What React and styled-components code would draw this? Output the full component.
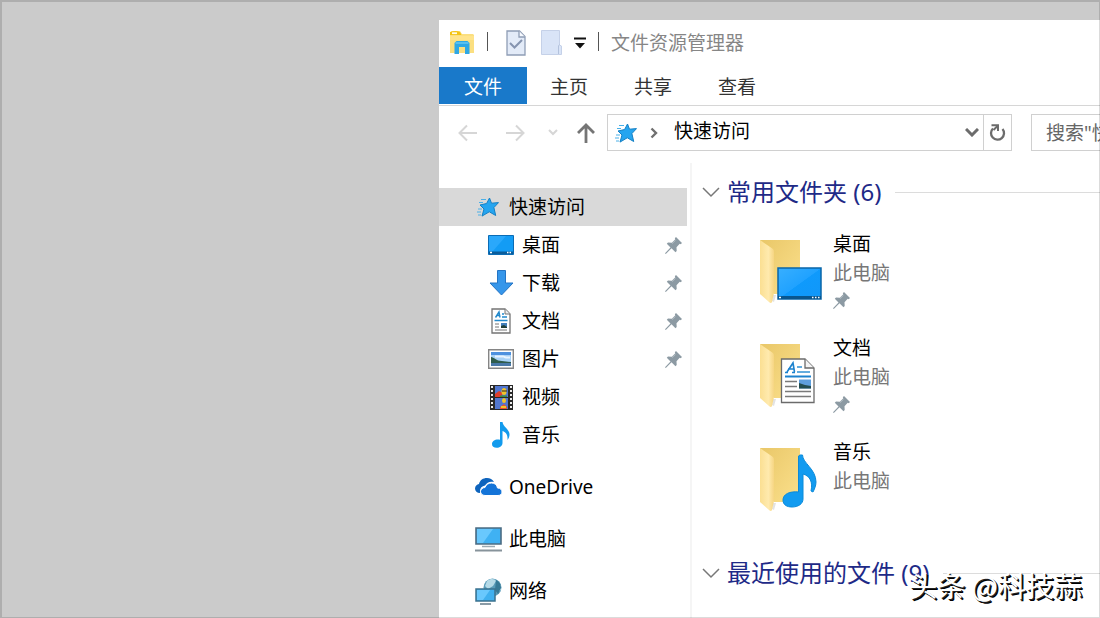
import React, { useState } from "react";
import styled, { createGlobalStyle } from "styled-components";

const GlobalStyle = createGlobalStyle`
  * {
    box-sizing: border-box;
  }
  body {
    margin: 0;
    font-family: "Noto Sans", "Noto Sans CJK SC", sans-serif;
    font-size: 19px;
    color: #000;
  }
  button, input {
    font: inherit;
    color: inherit;
  }
  button {
    padding: 0;
    border: 0;
    background: none;
    cursor: pointer;
  }
  svg {
    display: block;
    flex: none;
  }
`;

const Desktop = styled.div`
  position: relative;
  min-height: 100vh;
  display: flex;
  padding: 20px 0 0 439px;
  overflow: hidden;
  background-color: #cbcbcb;

  &::after {
    content: "";
    position: absolute;
    inset: 0;
    border: 1px solid rgba(0, 0, 0, 0.14);
    border-width: 2px 1px 1px 2px;
    pointer-events: none;
  }
`;

const Explorer = styled.div`
  flex: 1;
  min-width: 0;
  display: flex;
  flex-direction: column;
  background-color: #fff;
`;

const TitleBar = styled.header`
  height: 47px;
  display: flex;
  align-items: center;
  padding: 0 0 2px 10px;
`;

const Divider = styled.span`
  width: 1px;
  height: 19px;
  margin: 0 ${(p) => p.$after}px 2px 12px;
  background-color: #555;
`;

const QuickButton = styled.button`
  margin-right: ${(p) => p.$gap || 0}px;
`;

const Title = styled.h1`
  margin: 0;
  font-size: 19px;
  font-weight: 400;
  line-height: 28px;
  color: #868686;
`;

const Tabs = styled.div`
  display: flex;
  height: 39px;
  padding-bottom: 1px;
  border-bottom: 1px solid #d6d6d6;
`;

const Tab = styled.button`
  min-width: ${(p) => (p.$file ? 88 : 84)}px;
  height: 37px;
  background-color: ${(p) => (p.$file ? "#1979ca" : "transparent")};
  color: ${(p) => (p.$file ? "#fff" : "#333")};
`;

const NavBar = styled.div`
  display: flex;
  align-items: center;
  padding: 8px 0 0 19px;
`;

const NavButton = styled.button`
  margin-right: ${(p) => p.$gap}px;
`;

const Address = styled.div`
  flex: 1;
  min-width: 0;
  height: 37px;
  display: flex;
  align-items: center;
  padding-left: 7px;
  border: 1px solid #d0d0d0;
`;

const Crumb = styled.button`
  margin-left: 16px;
  margin-right: auto;
  padding-bottom: 2px;
  line-height: 33px;
`;

const Refresh = styled.button`
  width: 28px;
  height: 35px;
  display: flex;
  align-items: center;
  justify-content: center;
  margin-left: 4px;
  border-left: 1px solid #d0d0d0;
`;

const Search = styled.input`
  width: 69px;
  height: 37px;
  margin-left: 19px;
  padding: 0 0 0 14px;
  border: 1px solid #d0d0d0;
  border-right: 0;
  border-radius: 0;
  outline: 0;
  background-color: #fff;

  &::placeholder {
    color: #666;
    opacity: 1;
  }
`;

const Body = styled.div`
  flex: 1;
  display: flex;
  padding-top: 12px;
`;

const Sidebar = styled.nav`
  width: 253px;
  flex: none;
  padding: 25px 3px 0 0;
  border-right: 2px solid #f5f5f5;
`;

const SideItem = styled.a`
  height: 38px;
  display: flex;
  align-items: center;
  margin-top: ${(p) => (p.$root ? 14 : 0)}px;
  padding: 0 5px 0 ${(p) => (p.$child ? 48 : 35)}px;
  background-color: ${(p) => (p.$active ? "#d9d9d9" : "transparent")};
  color: #000;
  text-decoration: none;
`;

const SideIcon = styled.span`
  width: 28px;
  display: flex;
  justify-content: center;
  margin-right: 7px;
`;

const SideLabel = styled.span`
  flex: 1;
  line-height: 28px;
`;

const Content = styled.main`
  flex: 1;
  min-width: 0;
  padding-top: 11px;
`;

const GroupTitle = styled.h2`
  display: flex;
  align-items: center;
  margin: 0;
  padding-left: 10px;
  font-size: 24px;
  font-weight: 400;
  line-height: 36px;
  color: #1e2a87;

  &::after {
    content: "";
    flex: 1;
    height: 1px;
    margin-left: 14px;
    background-color: #dcdcdc;
  }
`;

const GroupToggle = styled.button`
  display: flex;
  align-items: center;
  gap: 7px;
`;

const FolderList = styled.ul`
  margin: 0;
  padding: 20px 0 13px 67px;
  list-style: none;
`;

const FolderItem = styled.li`
  height: 104px;
  display: flex;
  gap: 8px;
`;

const FolderIcon = styled.div`
  padding-top: 8px;
`;

const FolderText = styled.div`
  display: flex;
  flex-direction: column;
  line-height: 29px;
`;

const FolderPlace = styled.span`
  margin-bottom: 4px;
  color: #777;
`;

const Watermark = styled.div`
  position: absolute;
  right: 18px;
  bottom: 12px;
  font-family: "Noto Sans CJK SC", sans-serif;
  font-size: 28px;
  line-height: 42px;
  color: #fff;
  text-shadow: 1px 1px 0 #222, 2px 2px 0 #000;
`;

const StarIcon = () => (
  <svg width="22" height="20" viewBox="0 0 22 20">
    <path
      d="M12.500 1l2 5.200 7-.6-4.600 5 1.800 7.900-6.400-3.700-7.300 4.300 2-7.100-4-4L9.600 6.500z"
      fill="#25a5f0"
      stroke="#1580c4"
      strokeLinejoin="round"
    />
    <path d="M4 2.500h5M2 5.500h4M1 12h4M0 15h4M1 18h3" stroke="#4ab0e8" strokeWidth="1" />
  </svg>
);

const PinIcon = () => (
  <svg width="17" height="17" viewBox="0 0 17 17">
    <path d="M11 0l6 6-1.300 1.200-1-.4-3.200 3.500.2 3.700-1.200 1.200-4-4L.8 17 0 16.200l5.500-5.700-3.700-3.800L3 5.500l3.800.2L10.300 2.300 9.800 1.200z" fill="#8c9aa3" />
    <path d="M7 6.600l3.500-3.300" stroke="#b5c0c6" />
  </svg>
);

const ExplorerIcon = () => (
  <svg width="26" height="24" viewBox="0 0 26 24">
    <path d="M1 2.500L2.500 0H11l2 3h11l1 1v18H1z" fill="#fbdf80" />
    <path d="M1 1q6-2 10 0l1.500 3H1z" fill="#f4c415" />
    <path d="M3 2.200h5" stroke="#fffbe8" strokeWidth="1.800" />
    <path d="M1 5h24v4H1z" fill="#ffe48c" />
    <path d="M5.500 23V12l2-2h11l2 2v11H16v-7h-6v7z" fill="#2ea8e5" />
    <path d="M6.500 12h13" stroke="#67c7f2" strokeWidth="1.500" />
  </svg>
);

const PropertiesIcon = () => (
  <svg width="20" height="26" viewBox="0 0 20 26">
    <path d="M1 1h12.500L19 6.500V25H1z" fill="#e3ebf8" stroke="#8f9db5" strokeWidth="1.300" />
    <path d="M13 1v6h6" fill="#f7faff" stroke="#8f9db5" strokeWidth="1.300" />
    <path d="M4 13l4.500 4.500L16 10" fill="none" stroke="#8594b0" strokeWidth="2" />
  </svg>
);

const NewFolderIcon = () => (
  <svg width="21" height="25" viewBox="0 0 21 25">
    <path d="M.5.500h18V15l2 1v8.500H.5z" fill="#d9e4f7" stroke="#c5d1e8" />
    <path d="M17.500 24v-8l1-1.500" fill="none" stroke="#b3c2dd" />
  </svg>
);

const MenuArrowIcon = () => (
  <svg width="12" height="12" viewBox="0 0 12 12">
    <path d="M0 1.500h12" stroke="#111" strokeWidth="2" />
    <path d="M1 6h10l-5 5.500z" fill="#111" />
  </svg>
);

const ArrowIcon = ({ back }) => (
  <svg width="20" height="18" viewBox="0 0 20 18">
    <path
      d={back ? "M19 9H1.500M9 1.500L1.500 9 9 16.500" : "M1 9h17.500M11 1.500L18.500 9 11 16.500"}
      fill="none"
      stroke="#d6d6d6"
      strokeWidth="2"
    />
  </svg>
);

const UpIcon = () => (
  <svg width="18" height="20" viewBox="0 0 18 20">
    <path d="M9 20V2M1 10l8-8 8 8" fill="none" stroke="#757575" strokeWidth="2.800" />
  </svg>
);

const ChevronIcon = ({ width = 14, color = "#6c6c6c", stroke = 3 }) => (
  <svg width={width} height={width / 2 + 2} viewBox={`0 0 ${width} ${width / 2 + 2}`}>
    <path d={`M1 1l${width / 2 - 1} ${width / 2 - 1} ${width / 2 - 1}-${width / 2 - 1}`} fill="none" stroke={color} strokeWidth={stroke} />
  </svg>
);

const CrumbArrowIcon = () => (
  <svg width="8" height="12" viewBox="0 0 8 12">
    <path d="M1.500 1.500L6 6l-4.500 4.500" fill="none" stroke="#707070" strokeWidth="2.400" />
  </svg>
);

const RefreshIcon = () => (
  <svg width="17" height="18" viewBox="0 0 17 18">
    <path d="M4 4.500a6.500 6.500 0 1 0 9.500.5" fill="none" stroke="#6c6c6c" strokeWidth="2.300" />
    <path d="M2.500 1.200H9V7" fill="none" stroke="#6c6c6c" strokeWidth="2" />
    <path d="M9 1.500L4.500 6" stroke="#6c6c6c" strokeWidth="2" />
  </svg>
);

const DesktopIcon = () => (
  <svg width="26" height="20" viewBox="0 0 26 20">
    <path d="M.5.500h25v19H.5z" fill="#139cf5" stroke="#0b6cb5" />
    <path d="M1 1h17L5 16H1z" fill="#2aa8fb" />
    <path d="M1 16.500h24V19H1z" fill="#0b5d9b" />
    <path d="M2 17.500h2M19 17.500h1.500M21.500 17.500H23" stroke="#fff" strokeWidth="1.500" />
  </svg>
);

const DownloadIcon = () => (
  <svg width="25" height="26" viewBox="0 0 25 26">
    <path d="M8.500.5h8V13h7.500L12.500 25 1 13h7.500z" fill="#3596ea" stroke="#2474c4" />
  </svg>
);

const DocumentIcon = () => (
  <svg width="20" height="26" viewBox="0 0 20 26">
    <path d="M1 1h13l5 5v19H1z" fill="#fff" stroke="#747474" strokeWidth="1.300" />
    <path d="M14 1v5h5" fill="#eee" stroke="#747474" />
    <path d="M4.500 9.500L8 4l1 5.500M5.500 7.500H9" fill="none" stroke="#2289cc" strokeWidth="1.400" />
    <path d="M11 6h2M11 9h5M3.500 12.500h13" stroke="#2289cc" strokeWidth="1.500" />
    <path d="M4 16h4M4 19h4M4 22h12" stroke="#777" strokeWidth="1.200" />
    <path d="M10 15h6v5h-6z" fill="#427fbb" />
    <path d="M10 18l3-1 3 2v1h-6z" fill="#213e36" />
  </svg>
);

const PictureIcon = () => (
  <svg width="26" height="20" viewBox="0 0 26 20">
    <path d="M.7.7h24.600v18.600H.7z" fill="#fff" stroke="#858585" strokeWidth="1.400" />
    <path d="M3 3h20v14H3z" fill="#a9d2f6" />
    <path d="M3 3h20v3H3z" fill="#4e91df" />
    <path d="M7 7.500h8l3 1h4" stroke="#e8f4ff" strokeWidth="2" />
    <path d="M3 8c3 0 5 4 11 4l9 1v2H3z" fill="#2f5c4c" />
    <path d="M3 14h20v3H3z" fill="#4a79a8" />
  </svg>
);

const VideoIcon = () => (
  <svg width="23" height="25" viewBox="0 0 23 25">
    <path d="M0 0h23v25H0z" fill="#292929" />
    <path d="M2 1v24M21 1v24" stroke="#eee" strokeWidth="2" strokeDasharray="2 2" />
    <path d="M5 1h13v11H5zM5 13h13v11H5z" fill="#5277cf" />
    <path d="M5 9l4-3 4 2-2 4H5z" fill="#df3e2b" />
    <ellipse cx="14" cy="6.500" rx="2.500" ry="3.500" fill="#f1c329" />
    <path d="M12 6h5" stroke="#292929" />
    <path d="M10 10.500h7V12h-7z" fill="#3b8b40" />
    <ellipse cx="14" cy="15.500" rx="2" ry="2.500" fill="#f1c329" />
    <path d="M10 22l4-3 3 3v2h-7z" fill="#e65234" />
    <path d="M11 22h5" stroke="#f1c329" strokeWidth="2" />
  </svg>
);

const MusicIcon = () => (
  <svg width="20" height="26" viewBox="0 0 20 26">
    <path d="M9 0h2.500c.5 5 7 7 7 12.500 0 2-.7 4-2 5.500.5-5-1.500-8-5-9v12c0 3-2.800 4.800-5.800 4.800S1 24.500 1 22c0-3.200 3.800-5.200 8-4.200z" fill="#139bed" />
  </svg>
);

const CloudIcon = () => (
  <svg width="27" height="18" viewBox="0 0 27 18">
    <path d="M5 15C2 15 0 13 0 10.500S2 6.500 4 6C5 2 8 0 12 0c3 0 5.500 1.500 7 4-4-1-7 0-9 3.500C7 8 5 10 5 13z" fill="#0e64bd" />
    <path
      d="M10 17.500c-3 0-4.500-2-4.500-4s2-4 4.500-4c1-3 3.500-4.500 6.500-4.500 3.500 0 5.500 2 6 5 3 0 4.500 2 4.500 4s-1.500 3.500-4 3.500z"
      fill="#1474d8"
      stroke="#fff"
      strokeWidth="1"
    />
  </svg>
);

const ComputerIcon = () => (
  <svg width="27" height="25" viewBox="0 0 27 25">
    <path d="M1 1h25v16H1z" fill="#3fb1f3" stroke="#4c6c82" strokeWidth="1.600" />
    <path d="M2 2h16L8 16H2z" fill="#69c8fd" />
    <path d="M7 19.500h13" stroke="#9baab3" strokeWidth="1.500" />
    <path d="M0 23.500h27" stroke="#87939b" strokeWidth="2" />
  </svg>
);

const NetworkIcon = () => (
  <svg width="27" height="27" viewBox="0 0 27 27">
    <circle cx="17.500" cy="9.500" r="9" fill="#5a9cb9" />
    <path d="M12 3c4-3 8-2 9 0l-3 5-5 3-3-3zM22 8l4-1v5l-4 3z" fill="#b6dae7" />
    <path d="M21 2c4 2 5 5 5 8l-3 6-3-4z" fill="#377996" />
    <path d="M1 11h19v12H1z" fill="#40b0ef" stroke="#3b718f" strokeWidth="1.500" />
    <path d="M2 12h13l-7 10H2z" fill="#69c8fd" />
    <path d="M5 26h11" stroke="#8a9ba6" strokeWidth="2" />
  </svg>
);

// open folder, with the badge of the library drawn over its lower right corner
const LibraryFolder = ({ kind }) => (
  <svg width="66" height="68" viewBox="0 0 66 68">
    <defs>
      <linearGradient id={`back-${kind}`} x1="0" y1="0" x2="1" y2="1">
        <stop offset="0" stopColor="#e9c768" />
        <stop offset="1" stopColor="#fbe08c" />
      </linearGradient>
      <linearGradient id={`flap-${kind}`} x1="0" y1="0" x2="1" y2="0">
        <stop offset="0" stopColor="#fbdf92" />
        <stop offset="0.6" stopColor="#ffeaae" />
        <stop offset="1" stopColor="#f6d582" />
      </linearGradient>
      <linearGradient id={`screen-${kind}`} x1="0" y1="0" x2="1" y2="1">
        <stop offset="0" stopColor="#38afff" />
        <stop offset="0.5" stopColor="#20a2ff" />
        <stop offset="0.510" stopColor="#0f9afc" />
        <stop offset="1" stopColor="#1197f8" />
      </linearGradient>
    </defs>
    <path d="M1 2h40v54H15z" fill={`url(#back-${kind})`} />
    <path d="M14 57h3l-2 7-2-1z" fill="#e3e3e3" />
    <path d="M1 2l13 9q1 1 1 3v41l-2 9q-1 2-3 0L1 56z" fill={`url(#flap-${kind})`} />
    {kind === "desktop" && (
      <g>
        <path d="M19 30h43v31H19z" fill={`url(#screen-${kind})`} stroke="#0a65a8" strokeWidth="1.500" />
        <path d="M19 58h43v3H19z" fill="#09568e" />
        <path d="M20 59.500h2M53 59.500h1.500M56 59.500h1.500M59 59.500h1.500" stroke="#fff" strokeWidth="1.500" />
      </g>
    )}
    {kind === "document" && (
      <g>
        <path d="M22.500 17H46l9 9v34.500H22.500z" fill="#fff" stroke="#6b6b6b" strokeWidth="1.300" />
        <path d="M46 17v9h9" fill="#f4f4f4" stroke="#6b6b6b" strokeWidth="1.300" />
        <path d="M26 30.500h3M33 30.500h3M28 30l6-9 1.500 9M29 27h6" fill="none" stroke="#1c82ce" strokeWidth="1.600" />
        <path d="M38 25h5M38 30h13" stroke="#3191d4" strokeWidth="1.500" />
        <path d="M26 34.500h26" stroke="#1c82ce" strokeWidth="2" />
        <path d="M26 39.500h12M26 44.500h12M26 49.500h26M26 54.500h26" stroke="#7a7a7a" strokeWidth="1.400" />
        <path d="M40 37.500h12v9H40z" fill="#5f9fdd" />
        <path d="M40 41l6 2 6 1v2.500H40z" fill="#244e50" />
      </g>
    )}
    {kind === "music" && (
      <path
        d="M39.500 10q1-1.500 4-1c0 8 13.500 14 13.500 27 0 4-2 8-3 10l-2-1c2-9-1-15-8-17v25c0 5-5 8-11 8-5 0-9-2-9-7 0-6 7-9 15.500-8z"
        fill="#129bf0"
        stroke="#0b8ad9"
      />
    )}
  </svg>
);

const places = [
  { name: "快速访问", icon: StarIcon },
  { name: "桌面", icon: DesktopIcon, child: true, pinned: true },
  { name: "下载", icon: DownloadIcon, child: true, pinned: true },
  { name: "文档", icon: DocumentIcon, child: true, pinned: true },
  { name: "图片", icon: PictureIcon, child: true, pinned: true },
  { name: "视频", icon: VideoIcon, child: true },
  { name: "音乐", icon: MusicIcon, child: true },
  { name: "OneDrive", icon: CloudIcon, root: true },
  { name: "此电脑", icon: ComputerIcon, root: true },
  { name: "网络", icon: NetworkIcon, root: true },
];

const folders = [
  { name: "桌面", kind: "desktop", pinned: true },
  { name: "文档", kind: "document", pinned: true },
  { name: "音乐", kind: "music" },
];

const Group = ({ title, children }) => {
  const [open, setOpen] = useState(true);

  return (
    <section>
      <GroupTitle>
        <GroupToggle aria-expanded={open} onClick={() => setOpen(!open)}>
          <ChevronIcon width={18} color="#777" stroke={1.5} />
          {title}
        </GroupToggle>
      </GroupTitle>
      {open && children}
    </section>
  );
};

const App = () => {
  const [active, setActive] = useState("快速访问");

  return (
    <>
      <GlobalStyle />
      <Desktop>
        <Explorer>
          <TitleBar>
            <ExplorerIcon />
            <Divider $after={18} />
            <QuickButton $gap={15} aria-label="属性">
              <PropertiesIcon />
            </QuickButton>
            <QuickButton $gap={12} aria-label="新建文件夹">
              <NewFolderIcon />
            </QuickButton>
            <QuickButton aria-label="自定义快速访问工具栏">
              <MenuArrowIcon />
            </QuickButton>
            <Divider $after={12} />
            <Title>文件资源管理器</Title>
          </TitleBar>
          <Tabs>
            <Tab $file>文件</Tab>
            <Tab>主页</Tab>
            <Tab>共享</Tab>
            <Tab>查看</Tab>
          </Tabs>
          <NavBar>
            <NavButton $gap={27} aria-label="后退">
              <ArrowIcon back />
            </NavButton>
            <NavButton $gap={23} aria-label="前进">
              <ArrowIcon />
            </NavButton>
            <NavButton $gap={19} aria-label="最近位置">
              <ChevronIcon width={10} color="#d6d6d6" stroke={2} />
            </NavButton>
            <NavButton $gap={12} aria-label="向上">
              <UpIcon />
            </NavButton>
            <Address>
              <NavButton $gap={13} aria-label="位置">
                <StarIcon />
              </NavButton>
              <CrumbArrowIcon />
              <Crumb>快速访问</Crumb>
              <NavButton $gap={0} aria-label="以前的位置">
                <ChevronIcon />
              </NavButton>
              <Refresh aria-label="刷新">
                <RefreshIcon />
              </Refresh>
            </Address>
            <Search type="text" aria-label="搜索" placeholder={'搜索"快速访问"'} />
          </NavBar>
          <Body>
            <Sidebar>
              {places.map(({ name, icon: Icon, child, root, pinned }) => (
                <SideItem
                  key={name}
                  href="#"
                  $child={child}
                  $root={root}
                  $active={active === name}
                  onClick={() => setActive(name)}
                >
                  <SideIcon>
                    <Icon />
                  </SideIcon>
                  <SideLabel>{name}</SideLabel>
                  {pinned && <PinIcon />}
                </SideItem>
              ))}
            </Sidebar>
            <Content>
              <Group title="常用文件夹 (6)">
                <FolderList>
                  {folders.map((folder) => (
                    <FolderItem key={folder.name}>
                      <FolderIcon>
                        <LibraryFolder kind={folder.kind} />
                      </FolderIcon>
                      <FolderText>
                        <span>{folder.name}</span>
                        <FolderPlace>此电脑</FolderPlace>
                        {folder.pinned && <PinIcon />}
                      </FolderText>
                    </FolderItem>
                  ))}
                </FolderList>
              </Group>
              <Group title="最近使用的文件 (9)" />
            </Content>
          </Body>
        </Explorer>
        <Watermark>头条 @科技蒜</Watermark>
      </Desktop>
    </>
  );
};

export default App;
